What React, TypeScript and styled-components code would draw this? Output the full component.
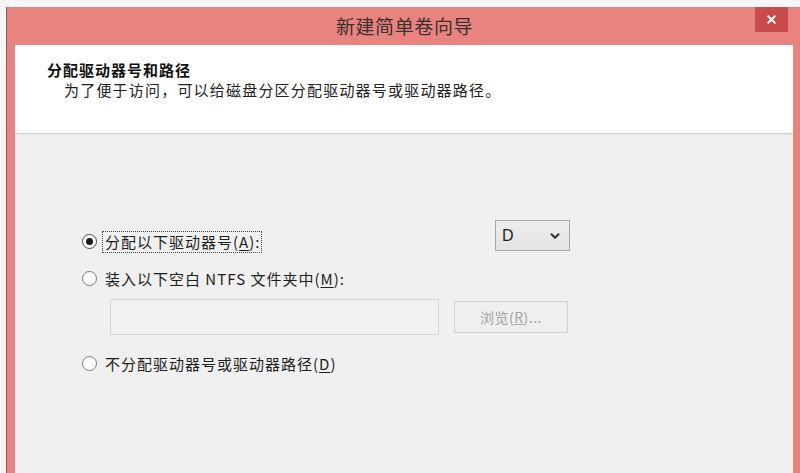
import styled, { createGlobalStyle } from "styled-components";
import { ChevronDown, X } from "lucide-react";

const GlobalStyle = createGlobalStyle`
  html, body {
    margin: 0;
    padding: 0;
    width: 800px;
    height: 473px;
    overflow: hidden;
    background: #f4f6f8;
    font-family: "Noto Sans CJK SC", "Noto Sans", sans-serif;
  }
`;

const Window = styled.div`
  margin: 7px 0 0 6px;
  width: 796px;
  height: 466px;
  display: flex;
  flex-direction: column;
  background: #e9837f;
  border-left: 1px solid #8a5a5a;
  box-sizing: border-box;
`;

const TitleBar = styled.div`
  height: 38px;
  flex-shrink: 0;
  display: grid;
  grid-template-columns: 1fr auto 1fr;
  align-items: start;
`;

const Title = styled.div`
  grid-column: 2;
  padding-top: 6px;
  font-size: 19px;
  line-height: 26px;
  letter-spacing: 0.6px;
  color: #3a3030;
`;

const CloseButton = styled.div`
  grid-column: 3;
  justify-self: end;
  margin-right: 14px;
  width: 33px;
  height: 25px;
  background: #c94b4b;
  display: flex;
  align-items: center;
  justify-content: center;
  color: #fff;
`;

const Client = styled.div`
  flex: 1;
  margin: 0 9px 0 8px;
  display: flex;
  flex-direction: column;
  background: #f0f0f0;
`;

const Header = styled.div`
  height: 89px;
  flex-shrink: 0;
  background: #fff;
  border-bottom: 1px solid #cfcfcf;
  box-shadow: 0 1px 0 #e6e6e6;
  padding: 15px 0 0 32px;
  box-sizing: border-box;
`;

const Heading = styled.div`
  font-size: 15px;
  font-weight: 700;
  line-height: 20px;
  letter-spacing: 1px;
  color: #111;
`;

const SubText = styled.div`
  margin-left: 17px;
  font-size: 15px;
  line-height: 20px;
  letter-spacing: 1.2px;
  color: #222;
`;

const Body = styled.div`
  flex: 1;
  padding: 86px 0 0 67px;
  display: flex;
  flex-direction: column;
`;

const Row = styled.div<{ $mt?: number; $h?: number }>`
  width: 488px;
  height: ${(p) => p.$h ?? 22}px;
  margin-top: ${(p) => p.$mt ?? 0}px;
  display: flex;
  align-items: flex-end;
`;

const Radio = styled.span<{ $checked?: boolean }>`
  width: 13px;
  height: 13px;
  margin-bottom: 4px;
  border-radius: 50%;
  border: 1px solid ${(p) => (p.$checked ? "#4a4a4a" : "#7a7a7a")};
  background: #fff;
  display: flex;
  align-items: center;
  justify-content: center;
  flex-shrink: 0;
  &::after {
    content: "";
    display: ${(p) => (p.$checked ? "block" : "none")};
    width: 7px;
    height: 7px;
    border-radius: 50%;
    background: #1c1c1c;
  }
`;

const Label = styled.span<{ $focused?: boolean }>`
  margin-left: 5px;
  padding: 0 1px 0 2px;
  font-size: 15px;
  line-height: 20px;
  letter-spacing: 1px;
  color: #1e1e1e;
  border: 1px dotted ${(p) => (p.$focused ? "#444" : "transparent")};
  white-space: nowrap;
  u {
    text-decoration: underline;
    text-underline-offset: 2px;
  }
`;

const Select = styled.div`
  margin-left: auto;
  align-self: flex-start;
  width: 75px;
  height: 31px;
  box-sizing: border-box;
  border: 1px solid #a9a9a9;
  background: linear-gradient(#eeeeee, #e3e3e3);
  display: flex;
  align-items: center;
  justify-content: space-between;
  padding: 0 7px 0 6px;
  font-family: "Liberation Sans", "Noto Sans", sans-serif;
  font-size: 16px;
  color: #222;
`;

const PathRow = styled.div`
  margin: 9px 0 0 28px;
  display: flex;
  gap: 15px;
`;

const PathInput = styled.div`
  width: 329px;
  height: 36px;
  box-sizing: border-box;
  border: 1px solid #d6d6d6;
  background: #f1f1f1;
`;

const BrowseButton = styled.div`
  width: 114px;
  height: 32px;
  margin-top: 2px;
  box-sizing: border-box;
  border: 1px solid #d2d2d2;
  background: #efefef;
  display: flex;
  align-items: center;
  justify-content: center;
  font-size: 14px;
  letter-spacing: 0.5px;
  color: #a3a3a3;
  u {
    text-decoration: underline;
  }
`;

export default function App() {
  return (
    <>
      <GlobalStyle />
      <Window>
        <TitleBar>
          <Title>新建简单卷向导</Title>
          <CloseButton>
            <X size={13} strokeWidth={3.5} />
          </CloseButton>
        </TitleBar>
        <Client>
          <Header>
            <Heading>分配驱动器号和路径</Heading>
            <SubText>为了便于访问，可以给磁盘分区分配驱动器号或驱动器路径。</SubText>
          </Header>
          <Body>
            <Row $h={33}>
              <Radio $checked />
              <Label $focused>
                分配以下驱动器号(<u>A</u>):
              </Label>
              <Select>
                <span>D</span>
                <ChevronDown size={14} strokeWidth={3.5} color="#333" />
              </Select>
            </Row>
            <Row $mt={15}>
              <Radio />
              <Label>
                装入以下空白 NTFS 文件夹中(<u>M</u>):
              </Label>
            </Row>
            <PathRow>
              <PathInput />
              <BrowseButton>
                浏览(<u>R</u>)...
              </BrowseButton>
            </PathRow>
            <Row $mt={18}>
              <Radio />
              <Label>
                不分配驱动器号或驱动器路径(<u>D</u>)
              </Label>
            </Row>
          </Body>
        </Client>
      </Window>
    </>
  );
}
